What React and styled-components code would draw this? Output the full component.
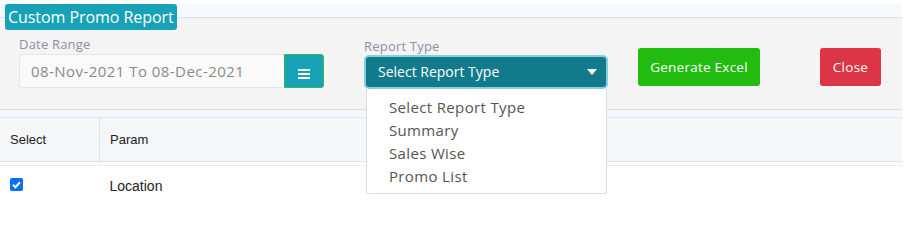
import React from 'react';
import styled, { createGlobalStyle } from 'styled-components';

const GlobalStyle = createGlobalStyle`
  body {
    margin: 0;
    background: #fff;
    font-family: 'Open Sans', 'Liberation Sans', sans-serif;
  }
`;

const Page = styled.div`
  width: 902px;
  padding-top: 4px;
`;

const TitleBar = styled.div`
  height: 13px;
  background: #f5f8fd;
  border-bottom: 1px solid #dde0e6;
`;

const Badge = styled.div`
  position: relative;
  z-index: 2;
  display: inline-block;
  margin-left: 5px;
  height: 26px;
  line-height: 26px;
  padding: 0 3px;
  background: #17a2b8;
  color: #fff;
  font-size: 16px;
  border-radius: 3px;
  letter-spacing: -0.05px;
`;

const Panel = styled.div`
  background: #f4f4f4;
  height: 91px;
  border-bottom: 1px solid #dcdcdc;
  display: flex;
  align-items: flex-start;
  padding-left: 19px;
`;

const Field = styled.div`
  display: flex;
  flex-direction: column;
  margin-top: ${p => p.top}px;
  margin-left: ${p => p.left || 0}px;
  width: ${p => p.width}px;
`;

const Label = styled.div`
  font-size: 13px;
  line-height: 17px;
  color: #8b90a4;
  letter-spacing: 0.2px;
  margin-bottom: ${p => p.gap}px;
`;

const InputGroup = styled.div`
  display: flex;
  height: 34px;
`;

const DateInput = styled.div`
  flex: 1;
  background: #fafafa;
  border: 1px solid #e6e6e6;
  border-right: none;
  border-radius: 4px 0 0 4px;
  color: #8a8a8a;
  font-size: 15px;
  letter-spacing: 0.45px;
  line-height: 32px;
  padding-left: 11px;
`;

const MenuButton = styled.div`
  width: 40px;
  background: #17a2b8;
  border: 1px solid #2fbf3a;
  border-radius: 0 3px 3px 0;
  display: flex;
  align-items: center;
  justify-content: center;
  padding-top: 5px;
  box-sizing: border-box;
`;

const SelectWrap = styled.div`
  position: relative;
`;

const Select = styled.div`
  height: 30px;
  background: #117a8b;
  border: 2px solid #86d0db;
  border-radius: 5px;
  color: #fff;
  font-size: 14px;
  line-height: 30px;
  padding-left: 12px;
  display: flex;
  align-items: center;
  justify-content: space-between;
  padding-right: 9px;
`;

const Caret = styled.span`
  width: 0;
  height: 0;
  border-left: 5px solid transparent;
  border-right: 5px solid transparent;
  border-top: 6px solid #fff;
`;

const Menu = styled.ul`
  position: absolute;
  z-index: 3;
  top: 34px;
  left: 2px;
  width: 241px;
  height: 105px;
  box-sizing: border-box;
  margin: 0;
  padding: 7px 0 0 22px;
  list-style: none;
  background: #fff;
  border: 1px solid #dcdcdc;
  border-top: none;
  border-radius: 0 0 3px 3px;
`;

const MenuItem = styled.li`
  font-size: 15px;
  letter-spacing: 0.35px;
  line-height: 23px;
  color: #555;
`;

const Button = styled.div`
  margin-top: 30px;
  margin-left: ${p => p.left}px;
  height: 38px;
  line-height: 38px;
  width: ${p => p.width}px;
  box-sizing: border-box;
  text-align: center;
  border-radius: 3px;
  color: #fff;
  font-size: 13.5px;
  letter-spacing: 0.25px;
  background: ${p => p.bg};
`;

const Gap = styled.div`
  height: 7px;
  background: #f3f6fb;
  border-bottom: 1px solid #e3e6ec;
`;

const Table = styled.table`
  width: 100%;
  border-collapse: collapse;
  font-family: 'Liberation Sans', Arial, sans-serif;
`;

const HeadRow = styled.tr`
  background: #f5f6f8;
  height: 43px;
  border-bottom: 1px solid #dee0e4;
`;

const Th = styled.th`
  text-align: left;
  font-weight: normal;
  font-size: 13px;
  color: #222;
  padding: 0 10px;
  width: ${p => p.width || 'auto'};
  border-right: ${p => (p.divider ? '1px solid #e0e2e6' : 'none')};
`;

const Spacer = styled.tr`
  height: 4px;
  border-bottom: 1px solid #eef0f3;
`;

const Td = styled.td`
  font-size: 14px;
  color: #222;
  padding: 0 10px;
  height: 40px;
  vertical-align: middle;
`;

const Check = styled.span`
  display: block;
  width: 13px;
  height: 13px;
  border-radius: 2px;
  background: #0b6ef9;
  margin-top: -2px;
  svg {
    display: block;
  }
`;

function Hamburger() {
  return (
    <svg width="12" height="10" viewBox="0 0 12 10">
      <rect x="0" y="0" width="12" height="2" fill="#fff" />
      <rect x="0" y="4" width="12" height="2" fill="#fff" />
      <rect x="0" y="8" width="12" height="2" fill="#fff" />
    </svg>
  );
}

export default function App() {
  return (
    <Page>
      <GlobalStyle />
      <TitleBar>
        <Badge>Custom Promo Report</Badge>
      </TitleBar>
      <Panel>
        <Field top={18} width={305}>
          <Label gap={1}>Date Range</Label>
          <InputGroup>
            <DateInput>08-Nov-2021 To 08-Dec-2021</DateInput>
            <MenuButton>
              <Hamburger />
            </MenuButton>
          </InputGroup>
        </Field>
        <Field top={20} left={40} width={244}>
          <Label gap={0}>Report Type</Label>
          <SelectWrap>
            <Select>
              Select Report Type
              <Caret />
            </Select>
            <Menu>
              <MenuItem>Select Report Type</MenuItem>
              <MenuItem>Summary</MenuItem>
              <MenuItem>Sales Wise</MenuItem>
              <MenuItem>Promo List</MenuItem>
            </Menu>
          </SelectWrap>
        </Field>
        <Button left={30} width={122} bg="#22bb0f">Generate Excel</Button>
        <Button left={60} width={61} bg="#dc3545">Close</Button>
      </Panel>
      <Gap />
      <Table>
        <thead>
          <HeadRow>
            <Th width="79px" divider>Select</Th>
            <Th>Param</Th>
          </HeadRow>
        </thead>
        <tbody>
          <Spacer />
          <tr>
            <Td>
              <Check>
                <svg width="13" height="13" viewBox="0 0 13 13">
                  <path d="M3 6.8 L5.4 9.2 L10 4.2" stroke="#fff" strokeWidth="2" fill="none" />
                </svg>
              </Check>
            </Td>
            <Td>Location</Td>
          </tr>
        </tbody>
      </Table>
    </Page>
  );
}
